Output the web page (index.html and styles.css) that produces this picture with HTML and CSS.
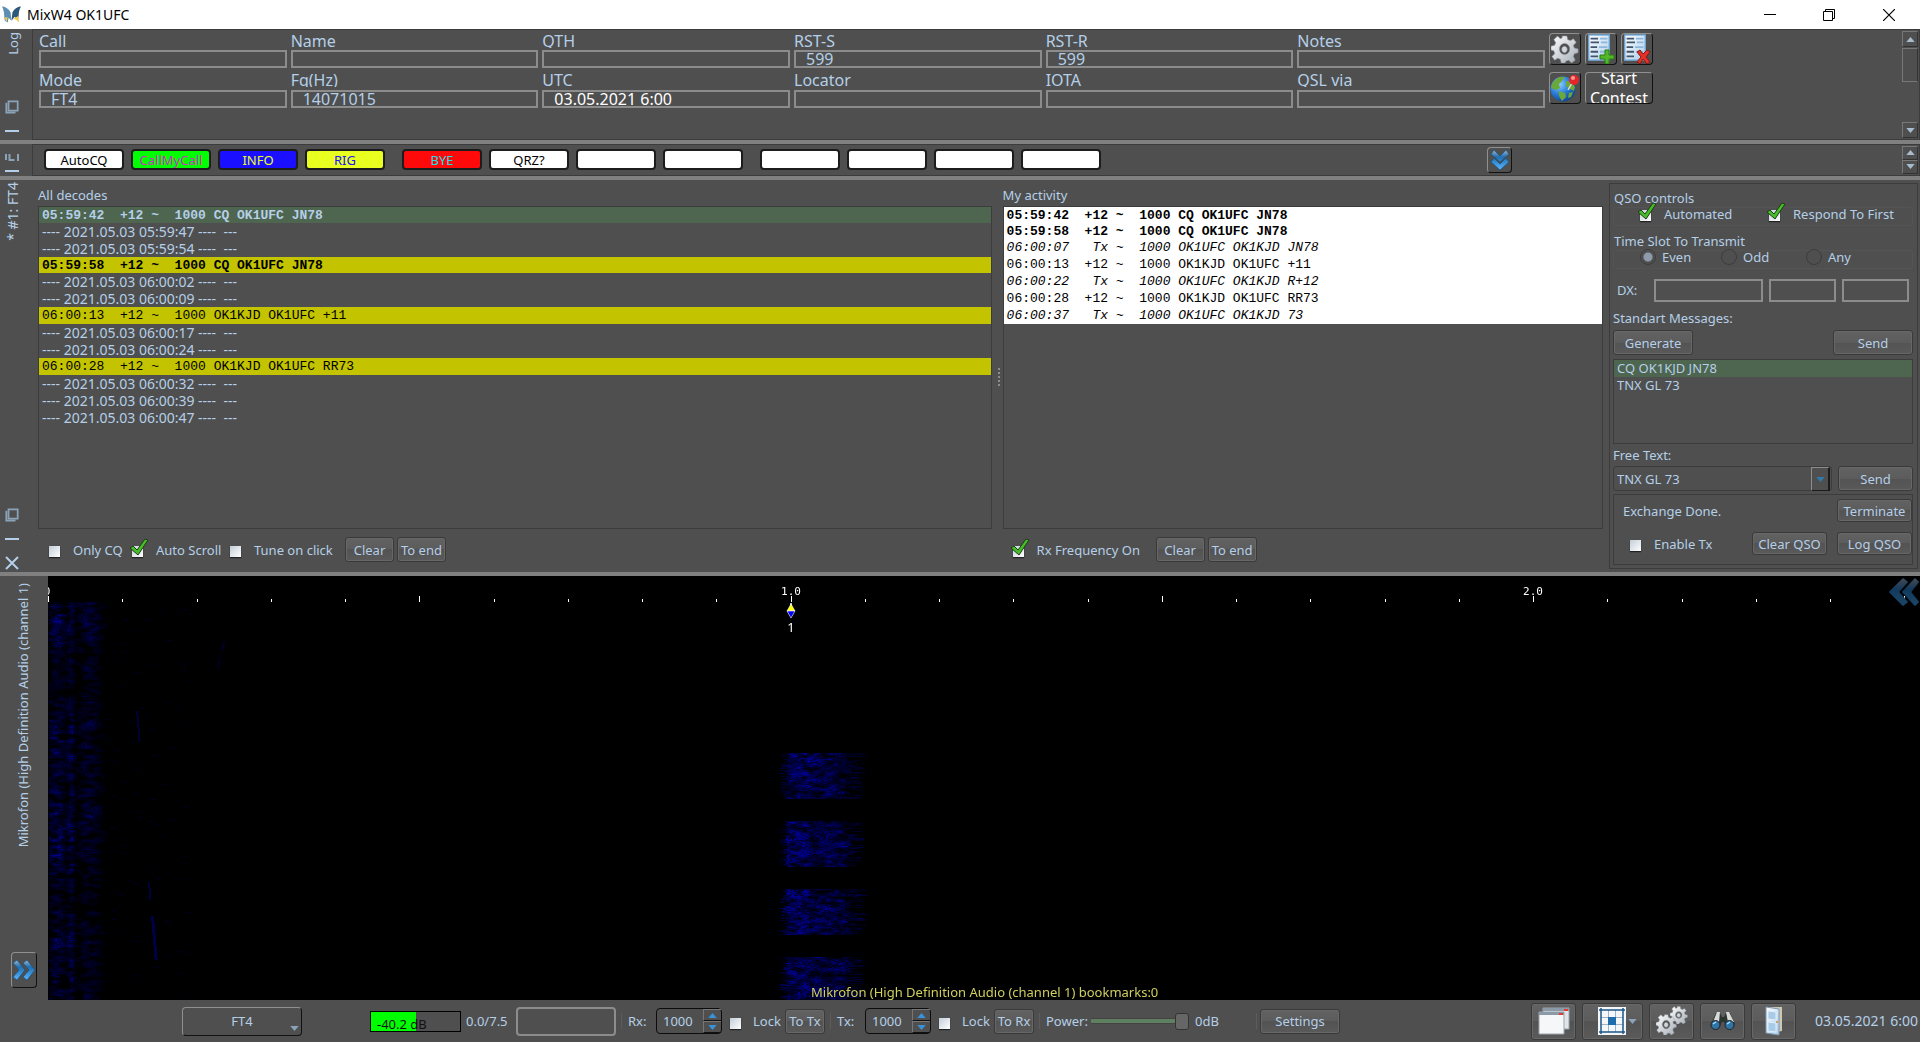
FILE: index.html
```html
<!DOCTYPE html>
<html lang="en">
<head>
<meta charset="utf-8">
<title>MixW4 OK1UFC</title>
<link rel="stylesheet" href="styles.css">
</head>
<body>
<svg width="0" height="0" class="defs" aria-hidden="true">
  <defs>
    <linearGradient id="blue" x1="0" y1="0" x2="0" y2="1"><stop offset="0" stop-color="#9fb4c8"/><stop offset=".35" stop-color="#1f6fb0"/><stop offset="1" stop-color="#5cb6ff"/></linearGradient>
    <linearGradient id="dim" x1="0" y1="0" x2="0" y2="1"><stop offset="0" stop-color="#4a4a50"/><stop offset=".4" stop-color="#123a5c"/><stop offset="1" stop-color="#1d4566"/></linearGradient>
    <linearGradient id="silver" x1="0" y1="0" x2="1" y2="1"><stop offset="0" stop-color="#ffffff"/><stop offset="1" stop-color="#a4adb6"/></linearGradient>
    <linearGradient id="sheet" x1="0" y1="0" x2="1" y2="1"><stop offset="0" stop-color="#ffffff"/><stop offset="1" stop-color="#a9cdea"/></linearGradient>
    <radialGradient id="ocean" cx=".35" cy=".3" r=".8"><stop offset="0" stop-color="#8fd0ff"/><stop offset=".5" stop-color="#2b7fd6"/><stop offset="1" stop-color="#0c3a86"/></radialGradient>
    <symbol id="gear" viewBox="0 0 30 30"><path fill="url(#silver)" stroke="#8d949b" stroke-width=".6" fill-rule="evenodd" d="M12 1h5l1 4 3 1 3-2 3 4-3 3 1 3 4 1v4l-4 1-1 3 2 4-4 3-3-3-3 1-1 2h-4l-1-4-3-1-3 2-3-4 3-3-1-3-3-1v-4l4-1 1-3-2-3 4-4 3 3 2-1zM14.500 9a5.500 6 0 1 0 .1 0zM14.500 12a3 3.500 0 1 1-.1 0z"/></symbol>
    <symbol id="sheetform" viewBox="0 0 24 30"><rect x="1" y="1" width="22" height="27" fill="url(#sheet)" stroke="#6fa6d6" stroke-width="1.500"/><path d="M3 5h8M3 9h9M3 14h7M3 19h8M3 24h8" stroke="#44546a" stroke-width="2"/><path d="M13 5h8M14 9h7M12 14h9M13 19h8" stroke="#8eb6da" stroke-width="2"/></symbol>
    <symbol id="float" viewBox="0 0 16 16"><path d="M4 1.500h10.500v10.500H4zM1.500 3v11.500H12" fill="none" stroke="#8ba3b8" stroke-width="2"/></symbol>
    <symbol id="up" viewBox="0 0 10 6"><path d="M0 6 5 0l5 6z" fill="currentColor"/></symbol>
    <symbol id="down" viewBox="0 0 10 6"><path d="M0 0h10L5 6z" fill="currentColor"/></symbol>
  </defs>
</svg>
<div class="app">
  <header class="titlebar">
    <svg class="logo" viewBox="0 0 20 17"><path d="M0 0c3 0 7 2 9 6l1 9-3-3-1 5-3-2C2 10 3 6 0 0z" fill="#5c8fb2"/><path d="M20 0c-3 0-7 2-9 6l-1 9 3-4 4 2C18 9 17 5 20 0z" fill="#2d5878"/><path d="M2 12l4-1-1 5zM12 13l5-3 1 7-3-3z" fill="#efc750"/></svg>
    <h1>MixW4 OK1UFC</h1>
    <div class="winbtns">
      <button aria-label="Minimize"><svg width="12" height="12" viewBox="0 0 12 12"><path d="M0 5.500h12" stroke="#000"/></svg></button>
      <button aria-label="Restore"><svg width="12" height="12" viewBox="0 0 12 12"><path d="M.5 2.500h9v9h-9zM2.500 2.500v-2h9v9h-2" fill="none" stroke="#000"/></svg></button>
      <button aria-label="Close"><svg width="12" height="12" viewBox="0 0 12 12"><path d="M0 0l12 12M12 0L0 12" stroke="#000" stroke-width="1.200"/></svg></button>
    </div>
  </header>

  <section class="dock log">
    <aside class="side">
      <span class="vtext">Log</span>
      <div class="sidebtns"><svg class="i14"><use href="#float"/></svg><i class="dash"></i></div>
    </aside>
    <div class="pane">
      <form class="fields">
        <label><span>Call</span><input type="text"></label>
        <label><span>Name</span><input type="text"></label>
        <label><span>QTH</span><input type="text"></label>
        <label><span>RST-S</span><input type="text" value="599"></label>
        <label><span>RST-R</span><input type="text" value="599"></label>
        <label><span>Notes</span><input type="text"></label>
        <label><span>Mode</span><input type="text" value="FT4"></label>
        <label><span>Fq(Hz)</span><input type="text" value="14071015"></label>
        <label><span>UTC</span><input class="white" type="text" value="03.05.2021 6:00"></label>
        <label><span>Locator</span><input type="text"></label>
        <label><span>IOTA</span><input type="text"></label>
        <label><span>QSL via</span><input type="text"></label>
      </form>
      <div class="tools">
        <button class="bevel" aria-label="Log settings"><svg width="28" height="28"><use href="#gear"/></svg></button>
        <button class="bevel" aria-label="Add record"><svg width="28" height="30" viewBox="0 0 28 30"><use href="#sheetform" width="24" height="28"/><path d="M18 16h4v5h5v4h-5v5h-4v-5h-5v-4h5z" fill="#52b82a" stroke="#2a7a10"/></svg></button>
        <button class="bevel" aria-label="Delete record"><svg width="28" height="30" viewBox="0 0 28 30"><use href="#sheetform" width="24" height="28"/><path d="M14 18l3-2 3 4 4-4 3 2-4 5 4 5-3 2-4-5-3 5-3-2 4-5z" fill="#e03228" stroke="#8f1410"/></svg></button>
        <button class="bevel" aria-label="Map"><svg width="30" height="28" viewBox="0 0 30 28"><circle cx="13" cy="15" r="12.500" fill="url(#ocean)"/><path d="M3 8l6-5 6 0-3 4-3 3 1 4-4 2-5-2zM16 7l6 1 3 5-1 4-4-2-4-3zM9 17l6 2 1 4-4 4-3-5zM19 19l4-1-2 5-3 1z" fill="#6aa83a"/><path d="M22 9l-4 7" stroke="#ddd" stroke-width="1.500"/><circle cx="24" cy="6" r="5" fill="#e2262a"/><circle cx="23" cy="4" r="2" fill="#ff9a96"/></svg></button>
        <button class="bevel contest"><span>Start Contest</span></button>
      </div>
      <div class="scroll">
        <button aria-label="Up"><svg class="tri"><use href="#up"/></svg></button>
        <i class="thumb"></i>
        <button aria-label="Down"><svg class="tri"><use href="#down"/></svg></button>
      </div>
    </div>
  </section>

  <section class="dock macros">
    <aside class="side">
      <svg width="14" height="7" viewBox="0 0 14 7"><path d="M1 0v6M4.500 0v6h5M13 0v7" fill="none" stroke="#8ba3b8" stroke-width="2"/></svg>
      <i class="dash"></i>
    </aside>
    <div class="pane">
      <div class="mbtns">
        <button>AutoCQ</button><button class="m-green">CallMyCall</button><button class="m-blue">INFO</button><button class="m-yellow">RIG</button>
        <button class="m-red first">BYE</button><button>QRZ?</button><button aria-label="Macro 7"></button><button aria-label="Macro 8"></button>
        <button class="first" aria-label="Macro 9"></button><button aria-label="Macro 10"></button><button aria-label="Macro 11"></button><button aria-label="Macro 12"></button>
      </div>
      <button class="bevel more" aria-label="More macros"><svg width="18" height="20" viewBox="0 0 18 20"><path d="M0 4l3-4 6 6 6-6 3 4-9 8zM0 12l3-4 6 6 6-6 3 4-9 8z" fill="url(#blue)" stroke="#14517f" stroke-width=".7"/></svg></button>
      <div class="scroll">
        <button aria-label="Up"><svg class="tri"><use href="#up"/></svg></button>
        <button aria-label="Down"><svg class="tri"><use href="#down"/></svg></button>
      </div>
    </div>
  </section>

  <section class="dock decode">
    <aside class="side">
      <span class="vtext">* #1: FT4</span>
      <div class="sidebtns"><svg class="i14"><use href="#float"/></svg><i class="dash"></i><svg class="i14" viewBox="0 0 14 14"><path d="M1 1l12 12M13 1L1 13" stroke="#b5cfe8" stroke-width="2"/></svg></div>
    </aside>
    <div class="lists">
      <div class="col all">
        <h2>All decodes</h2>
        <ul class="box">
          <li class="m b sel">05:59:42  +12 ~  1000 CQ OK1UFC JN78</li>
          <li>---- 2021.05.03 05:59:47 ----  ---</li>
          <li>---- 2021.05.03 05:59:54 ----  ---</li>
          <li class="m b hot">05:59:58  +12 ~  1000 CQ OK1UFC JN78</li>
          <li>---- 2021.05.03 06:00:02 ----  ---</li>
          <li>---- 2021.05.03 06:00:09 ----  ---</li>
          <li class="m hot">06:00:13  +12 ~  1000 OK1KJD OK1UFC +11</li>
          <li>---- 2021.05.03 06:00:17 ----  ---</li>
          <li>---- 2021.05.03 06:00:24 ----  ---</li>
          <li class="m hot">06:00:28  +12 ~  1000 OK1KJD OK1UFC RR73</li>
          <li>---- 2021.05.03 06:00:32 ----  ---</li>
          <li>---- 2021.05.03 06:00:39 ----  ---</li>
          <li>---- 2021.05.03 06:00:47 ----  ---</li>
        </ul>
        <div class="under">
          <label class="chk w83"><input type="checkbox">Only CQ</label>
          <label class="chk w98"><input type="checkbox" checked>Auto Scroll</label>
          <label class="chk w115"><input type="checkbox">Tune on click</label>
          <button class="btn">Clear</button><button class="btn">To end</button>
        </div>
      </div>
      <div class="grip"></div>
      <div class="col mine">
        <h2>My activity</h2>
        <ul class="box light">
          <li class="m b">05:59:42  +12 ~  1000 CQ OK1UFC JN78</li>
          <li class="m b">05:59:58  +12 ~  1000 CQ OK1UFC JN78</li>
          <li class="m it">06:00:07   Tx ~  1000 OK1UFC OK1KJD JN78</li>
          <li class="m">06:00:13  +12 ~  1000 OK1KJD OK1UFC +11</li>
          <li class="m it">06:00:22   Tx ~  1000 OK1UFC OK1KJD R+12</li>
          <li class="m">06:00:28  +12 ~  1000 OK1KJD OK1UFC RR73</li>
          <li class="m it">06:00:37   Tx ~  1000 OK1UFC OK1KJD 73</li>
        </ul>
        <div class="under">
          <label class="chk w143"><input type="checkbox" checked>Rx Frequency On</label>
          <button class="btn">Clear</button><button class="btn">To end</button>
        </div>
      </div>
    </div>
    <div class="qso">
      <fieldset class="grp">
        <legend>QSO controls</legend>
        <div class="opts">
          <label class="chk w129"><input type="checkbox" checked>Automated</label>
          <label class="chk"><input type="checkbox" checked>Respond To First</label>
        </div>
      </fieldset>
      <fieldset class="grp">
        <legend>Time Slot To Transmit</legend>
        <div class="opts">
          <label class="rad w81"><input type="radio" name="slot" checked>Even</label>
          <label class="rad w85"><input type="radio" name="slot">Odd</label>
          <label class="rad"><input type="radio" name="slot">Any</label>
        </div>
      </fieldset>
      <div class="dx"><label for="dx">DX:</label><input id="dx" class="call" type="text"><input type="text" aria-label="DX locator"><input type="text" aria-label="DX report"></div>
      <h3>Standart Messages:</h3>
      <div class="spread"><button class="btn w80">Generate</button><button class="btn w80">Send</button></div>
      <ul class="msgs"><li class="sel">CQ OK1KJD JN78</li><li>TNX GL 73</li></ul>
      <h3><label for="free">Free Text:</label></h3>
      <div class="spread free">
        <div class="combo"><select id="free"><option>TNX GL 73</option></select><i class="drop"><svg class="tri"><use href="#down"/></svg></i></div>
        <button class="btn w75">Send</button>
      </div>
      <div class="state">
        <div class="line"><span class="done">Exchange Done.</span><button class="btn w75 low">Terminate</button></div>
        <div class="line"><label class="chk grow"><input type="checkbox">Enable Tx</label><button class="btn w75 low">Clear QSO</button><button class="btn w75 low">Log QSO</button></div>
      </div>
    </div>
  </section>

  <section class="dock fall">
    <aside class="side">
      <span class="vtext">Mikrofon (High Definition Audio (channel 1)</span>
      <button class="bevel open" aria-label="Expand"><svg width="24" height="22" viewBox="0 0 24 22"><path d="M1 4l4-3 8 10-8 10-4-3 6-7zM11 4l4-3 8 10-8 10-4-3 6-7z" fill="url(#blue)" stroke="#14517f" stroke-width=".7"/></svg></button>
    </aside>
    <div class="water">
      <canvas id="spectrum"></canvas>
      <span class="mark zero">0</span>
      <span class="mark one">1.0</span>
      <span class="mark two">2.0</span>
      <div class="cursor"><svg width="10" height="16" viewBox="0 0 10 16"><path d="M5 0v4" stroke="#fff" stroke-width="1.500"/><path d="M5 1l4 7H1z" fill="#ff0" stroke="#fff" stroke-width=".6"/><path d="M1 8h8l-4 7z" fill="#00f" stroke="#fff" stroke-width=".6"/></svg><span>1</span></div>
      <svg class="back" width="30" height="28" viewBox="0 0 30 28"><path d="M14 0l5 4-9 10 9 10-5 4L0 14zM26 0l4 4-8 10 8 10-4 4-13-14z" fill="url(#dim)" stroke="#0f3554" stroke-width=".7"/></svg>
      <p class="caption">Mikrofon (High Definition Audio (channel 1) bookmarks:0</p>
    </div>
  </section>

  <footer class="status">
    <button class="bevel mode">FT4<svg class="tri"><use href="#down"/></svg></button>
    <div class="meter"><i style="width:54%"></i><span>-40.2 dB</span></div>
    <span class="ratio">0.0/7.5</span>
    <input class="txtbox" type="text" aria-label="Text">
    <i class="sep"></i>
    <label class="fl" for="rx">Rx:</label>
    <div class="spin"><input id="rx" type="text" value="1000"><button aria-label="Rx up"><svg><use href="#up"/></svg></button><button aria-label="Rx down"><svg><use href="#down"/></svg></button></div>
    <label class="chk lock"><input type="checkbox">Lock</label>
    <button class="btn w40">To Tx</button>
    <i class="sep"></i>
    <label class="fl" for="tx">Tx:</label>
    <div class="spin"><input id="tx" type="text" value="1000"><button aria-label="Tx up"><svg><use href="#up"/></svg></button><button aria-label="Tx down"><svg><use href="#down"/></svg></button></div>
    <label class="chk lock"><input type="checkbox">Lock</label>
    <button class="btn w40">To Rx</button>
    <i class="sep"></i>
    <label class="pw" for="power">Power:</label>
    <input id="power" type="range" min="0" max="100" value="100">
    <span class="db">0dB</span>
    <i class="sep"></i>
    <button class="btn w80">Settings</button>
    <div class="launch">
      <button class="btn big" aria-label="Windows"><svg width="32" height="28" viewBox="0 0 32 28"><path d="M5 1h26v21H5z" fill="#dfe5ea" stroke="#9aa4ad"/><path d="M5 1h26v3H5z" fill="#8b9aa8"/><path d="M26 2h4v2h-4z" fill="#e23b30"/><path d="M1 5h25v22H1z" fill="#f5f7f8" stroke="#9aa4ad"/><path d="M1 5h25v3H1z" fill="#8b9aa8"/><path d="M21 6h4v2h-4z" fill="#e23b30"/></svg></button>
      <button class="btn big grid" aria-label="Layout"><svg width="28" height="28" viewBox="0 0 28 28"><path d="M0 0h28v28H0z" fill="#f4f7fa"/><path d="M10.500 3v22M17.500 3v22M3 10.500h22M3 17.500h22" stroke="#9fb3c6"/><path d="M10 10h8v8h-8z" fill="#1f6cad"/><path d="M3 1v26M25 1v26M1 3h26M1 25h26" stroke="#1c5586" stroke-width="1.500"/></svg><svg class="tri"><use href="#down"/></svg></button>
      <button class="btn big" aria-label="Options"><svg width="32" height="30" viewBox="0 0 32 30"><use href="#gear" x="14" y="0" width="18" height="18"/><use href="#gear" x="0" y="8" width="21" height="21"/></svg></button>
      <button class="btn big" aria-label="Search"><svg width="26" height="20" viewBox="0 0 26 20"><path d="M6 2h4l2 4h2l2-4h4l5 11-7 5-4-7h-2l-4 7-7-5z" fill="#2c3430"/><path d="M7 1h3l-1 10-6 0zM16 1h3l5 10-6 0z" fill="#d7dbd8"/><circle cx="5.500" cy="14" r="4.500" fill="#2f75a6" stroke="#222"/><circle cx="19.500" cy="14" r="4.500" fill="#2f75a6" stroke="#222"/><path d="M3 13l3-2M17 13l3-2" stroke="#a8dcff" stroke-width="1.500"/></svg></button>
      <button class="btn big" aria-label="Exit"><svg width="20" height="30" viewBox="0 0 20 30"><path d="M2 1h16v24l-5 1V4z" fill="#cfc7b5"/><path d="M2 1l13 2v26L2 27z" fill="url(#sheet)" stroke="#7f97ac"/><path d="M4 5l8 1v8l-8-1zM4 16l8 1v9l-8-1z" fill="#a8cbe8" stroke="#dfeefa"/><circle cx="13" cy="16" r="1" fill="#d08b2a"/></svg></button>
      <time>03.05.2021 6:00</time>
    </div>
  </footer>
</div>
<script src="spectrum.js"></script>
</body>
</html>
```

FILE: styles.css
```css
* { box-sizing: border-box; margin: 0; padding: 0; }
body { font: 13px/16px "Noto Sans", sans-serif; color: #b5cfe8; background: #4f4f4f; }
button, input, select { font: inherit; color: inherit; background: none; border: 0; border-radius: 0; appearance: none; min-width: 0; }
button { display: flex; align-items: center; justify-content: center; flex: none; }
ul { list-style: none; }
h1, h2, h3 { font-weight: 400; font-size: inherit; }
fieldset { border: 0; min-width: 0; }
svg { display: block; flex: none; }
.defs { position: absolute; }
.app { display: flex; flex-direction: column; min-height: 100vh; }

/* Title bar */
.titlebar { display: flex; align-items: center; gap: 6px; height: 29px; padding-left: 2px; background: #fff; color: #000; }
.logo { width: 19px; height: 17px; }
.titlebar h1 { font-size: 14px; }
.winbtns { display: flex; margin-left: auto; }
.winbtns button { width: 59px; height: 28px; }
.winbtns button:last-child { width: 62px; }

/* Docked panels */
.dock { display: flex; border-bottom: 4px solid #808080; }
.side { display: flex; flex-direction: column; justify-content: space-between; flex: none; width: 32px; padding: 3px 0 8px 5px; }
.vtext { writing-mode: vertical-rl; transform: rotate(180deg); width: 17px; overflow: hidden; white-space: nowrap; }
.sidebtns { display: flex; flex-direction: column; gap: 16px; }
.i14 { width: 14px; height: 14px; }
.dash { width: 14px; height: 2px; background: #b5cfe8; }
.pane { display: flex; flex: 1; border: 1px solid #3c3c3c; min-width: 0; }

/* Log entry */
.log { height: 115px; }
.fields { flex: 1; display: grid; grid-template-columns: repeat(6, 1fr); gap: 4px; padding: 3px 0 0 6px; align-content: start; font-size: 16px; }
.fields label { display: block; min-width: 0; }
.fields span { display: block; height: 15px; margin-bottom: 2px; line-height: 16px; overflow: hidden; }
.fields input { display: block; width: 100%; height: 18px; line-height: 16px; border: 2px solid #8c8c8c; padding-left: 10px; }
.fields .white { color: #fff; }
.fields label:nth-child(n+7) input { margin-top: 3px; }
.tools { display: grid; grid-template-columns: repeat(3, 32px); gap: 7px 4px; padding: 3px 249px 0 4px; align-content: start; }
.bevel { border: 1px solid; border-color: #909090 #111 #111 #909090; border-radius: 4px; overflow: hidden; }
.tools .bevel { height: 32px; }
.tools .contest { grid-column: span 2; color: #fff; font-size: 16px; line-height: 20px; }
.contest span { width: 60px; }
.scroll { display: flex; flex-direction: column; width: 17px; flex: none; margin: 1px 0; color: #a9bccd; }
.scroll button { width: 16px; height: 16px; border: 1px solid #777; border-right-color: #333; border-bottom-color: #333; }
.tri { width: 9px; height: 5px; }
.thumb { width: 16px; height: 34px; border: 1px solid #777; border-right-color: #333; margin-top: 1px; }
.scroll button:last-child { margin-top: auto; }

/* Macro buttons */
.macros { height: 36px; }
.macros .side { padding: 10px 0 4px 5px; }
.macros .pane { align-items: center; padding-bottom: 1px; }
.mbtns { display: flex; gap: 7px; padding-left: 11px; color: #000; }
.mbtns button { width: 80px; height: 21px; background: #fff; border: 2px solid #1c1c1c; border-radius: 4px; }
.mbtns .first { margin-left: 10px; }
.mbtns .m-green { background: #00ff00; color: #d030c0; }
.mbtns .m-blue { background: #1a10ff; color: #e8ff20; }
.mbtns .m-yellow { background: #e8ff20; color: #2010ff; }
.mbtns .m-red { background: #ff0a0a; color: #20dfe8; }
.macros .more { width: 25px; height: 26px; margin-left: auto; margin-right: 390px; }
.macros .scroll { height: 28px; margin: 0; }
.macros .scroll button { height: 14px; }

/* Decodes */
.decode { height: 396px; }
.decode .side { padding: 2px 0 2px 5px; }
.decode .side .vtext { font-size: 14px; }
.lists { flex: 1; display: flex; padding: 7px 6px 0 6px; min-width: 0; }
.col { display: flex; flex-direction: column; min-width: 0; }
.all { flex: 953; }
.mine { flex: 600; }
.col h2 { height: 19px; }
.box { height: 323px; border: 1px solid #3c3c3c; }
.box li { height: 17px; line-height: 17px; font-size: 14px; padding-left: 3px; white-space: pre; overflow: hidden; }
.box .m { font-family: "Liberation Mono", "Courier New", monospace; font-size: 13px; }
.box .b { height: 16px; line-height: 17px; font-weight: 700; }
.box .it { font-style: italic; }
.box .hot { background: #c3c300; color: #000; }
.sel { background: #4e654f; }
.light li { background: #fff; color: #000; }
.grip { flex: none; width: 8px; height: 18px; margin: 181px 3px 0 0; border-right: 2px dotted #8c8c8c; }
.under { display: flex; align-items: center; gap: 3px; height: 41px; padding-left: 11px; }
.under .chk { margin-right: -3px; }
.mine .under { padding-left: 10px; }

/* Controls */
.chk, .rad { display: flex; align-items: center; flex: none; white-space: nowrap; }
.chk input { position: relative; flex: none; width: 11px; height: 11px; margin: 4px 13px 0 0; background: linear-gradient(135deg, #c3ced8, #fff); box-shadow: 0 1px 1px #222; }
.chk input:checked::after { content: ""; position: absolute; left: -3px; bottom: 0; width: 20px; height: 19px; background: url("data:image/svg+xml,%3Csvg xmlns='http://www.w3.org/2000/svg' viewBox='0 0 20 19'%3E%3Cpath d='M1 10l3-2 4 4L16 1l3 1L9 17z' fill='%2344bd27' stroke='%23203a18'/%3E%3C/svg%3E"); }
.w83 { width: 83px; }
.w98 { width: 98px; }
.w115 { width: 115px; }
.w143 { width: 143px; }
.w129 { width: 129px; }
.w81 { width: 81px; }
.w85 { width: 85px; }
.rad input { flex: none; width: 16px; height: 16px; margin-right: 6px; border: 1px solid #3c3c3c; border-radius: 50%; }
.rad input:checked { background: radial-gradient(circle, #8d9bab 4px, transparent 5px); }
.btn { width: 49px; height: 25px; border: 1px solid #3a3a3a; border-radius: 3px; background: linear-gradient(#626262, #5c5c5c 50%, #535353 50%, #5a5a5a); box-shadow: inset 0 0 0 1px #676767; white-space: nowrap; }
.low { height: 23px; }
.w80 { width: 80px; }
.w75 { width: 75px; }
.w40 { width: 40px; }

/* QSO panel */
.qso { flex: none; width: 309px; height: 386px; margin: 3px 2px 0 0; padding: 6px 4px 0 3px; border: 1px solid #3c3c3c; }
.grp { height: 43px; }
.grp legend { height: 17px; padding-left: 1px; line-height: 16px; white-space: nowrap; }
.opts { display: flex; align-items: center; height: 19px; padding-left: 26px; border: 1px solid #545454; border-radius: 3px; }
.opts label { height: 16px; margin-top: -6px; }
.dx { display: flex; align-items: center; gap: 6px; height: 24px; margin: 2px 4px 8px 4px; }
.dx label { width: 31px; }
.dx input { flex: 66; height: 23px; border: 2px solid #8c8c8c; }
.dx .call { flex: 110; }
.spread { display: flex; justify-content: space-between; margin: 4px 0; }
.msgs { height: 85px; border: 1px solid #3c3c3c; margin-bottom: 3px; }
.msgs li { height: 17px; line-height: 17px; padding-left: 3px; }
.free { gap: 6px; margin: 3px 0; }
.combo { position: relative; display: flex; flex: 1; height: 25px; border: 1px solid #3c3c3c; border-radius: 3px; }
.combo select { flex: 1; padding-left: 3px; }
.drop { position: absolute; top: 0; right: 1px; display: flex; align-items: center; justify-content: center; width: 19px; height: 24px; border: 1px solid #8c8c8c; border-right: 2px solid #1c1c1c; border-bottom: 1px solid #1c1c1c; color: #2f79ad; pointer-events: none; }
.state { height: 71px; padding-top: 4px; border: 1px solid #3c3c3c; }
.line { display: flex; align-items: center; gap: 10px; margin-bottom: 10px; }
.done { flex: 1; padding-left: 9px; }
.grow { flex: 1; padding-left: 16px; }

/* Waterfall */
.fall { flex: 1; border: 0; }
.fall .side { width: 48px; padding: 7px 0 12px 11px; }
.fall .vtext { margin-left: 4px; }
.open { width: 26px; height: 36px; }
.water { position: relative; flex: 1; min-width: 0; background: #000; overflow: hidden; }
.water canvas { position: absolute; inset: 0; width: 100%; height: 100%; }
.mark, .cursor, .back, .caption { position: absolute; }
.mark { top: 9px; width: 40px; text-align: center; color: #fff; font: 11px/14px "DejaVu Sans Mono", monospace; }
.zero { left: -21px; }
.one { left: 723px; }
.two { left: 1465px; }
.cursor { left: 738px; top: 27px; display: flex; flex-direction: column; align-items: center; color: #fff; }
.back { top: 2px; right: 1px; }
.caption { left: 763px; bottom: 0; color: #cfcf60; }

/* Status bar */
.status { display: flex; align-items: center; height: 42px; padding: 0 2px 0 182px; }
.mode { position: relative; width: 120px; height: 29px; }
.mode .tri { position: absolute; right: 2px; bottom: 4px; color: #8ba3b8; }
.meter { position: relative; width: 91px; height: 21px; margin-left: 68px; border: 1px solid #000; color: #111; flex: none; }
.meter i { display: block; max-width: 50%; height: 19px; background: #00ff00; }
.meter span { position: absolute; left: 6px; top: 4px; }
.ratio { width: 46px; margin-left: 5px; flex: none; }
.txtbox { width: 100px; height: 29px; margin-left: 4px; border: 2px solid #8c8c8c; border-radius: 4px; }
.sep { width: 1px; height: 16px; margin: 0 6px 0 5px; background: #5c5c5c; flex: none; }
.fl { width: 28px; flex: none; }
.spin { display: grid; grid-template: 12px 12px / 1fr 18px; width: 66px; height: 26px; border: 1px solid #0c0c0c; border-radius: 4px; flex: none; color: #3a93d8; }
.spin input { grid-row: span 2; width: 45px; padding-left: 6px; color: #b5cfe8; }
.spin button { border: 1px solid #777; border-right: 0; border-bottom-color: #111; }
.spin svg { width: 9px; height: 5px; }
.lock { margin-left: 8px; width: 55px; }
.lock input { margin-right: 12px; }
.pw { width: 45px; flex: none; }
#power { width: 98px; height: 18px; flex: none; background: linear-gradient(transparent 6px, #444 6px 7px, #5f8060 7px 11px, #444 11px 12px, transparent 12px); }
#power::-webkit-slider-thumb { appearance: none; width: 14px; height: 17px; border: 1px solid #333; border-radius: 3px; background: #666; }
.db { width: 56px; margin-left: 6px; flex: none; }
.sep + .w80 { margin-left: -3px; }
.launch { display: flex; align-items: center; gap: 6px; margin-left: auto; }
.big { width: 45px; height: 37px; }
.grid { width: 61px; gap: 2px; padding-left: 10px; color: #8ba3b8; }
time { margin-left: 13px; font-size: 14px; }
```

FILE: spectrum.js
```js
// Waterfall: receiver noise at the low end, four FT4 transmissions at 1.0 kHz and the scale ticks.
const canvas = document.getElementById("spectrum");
const w = canvas.width = canvas.clientWidth;
const h = canvas.height = canvas.clientHeight;
const ctx = canvas.getContext("2d");
let seed = 7;
const rnd = () => (seed = (seed * 16807) % 2147483647) / 2147483647;

// Smooth noise on a grid of cells, so that neighbouring streaks clump together.
const grid = Array.from({ length: 4096 }, rnd);
function clump(x, y) {
  const gx = x / 6, gy = y / 3;
  const ix = Math.floor(gx), iy = Math.floor(gy), fx = gx - ix, fy = gy - iy;
  const at = (a, b) => grid[(a * 37 + b * 101) % 4096];
  const top = at(ix, iy) * (1 - fx) + at(ix + 1, iy) * fx;
  const low = at(ix, iy + 1) * (1 - fx) + at(ix + 1, iy + 1) * fx;
  return top * (1 - fy) + low * fy;
}
function streak(x, y, len, level) {
  if (level < 0.06) return;
  ctx.fillStyle = `rgb(0,0,${Math.round(200 * Math.min(level, 0.7))})`;
  ctx.fillRect(Math.round(x), y, Math.round(len), 1);
}
for (let y = 26; y < h; y++) {
  const swell = 0.85 + 0.35 * Math.sin(y / 23) * Math.sin(y / 61);
  for (let x = 1; x < 66; x += 2) {
    const level = 0.6 * Math.exp(-Math.pow((x - 8) / 9, 2)) + 0.62 * Math.exp(-Math.pow((x - 22) / 3, 2)) +
      0.42 * Math.exp(-Math.pow((x - 40) / 11, 2));
    streak(x, y, 2 + rnd() * 3, level * swell * Math.pow(clump(x, y), 1.5) * (0.4 + rnd() * 1.3));
  }
  if (rnd() < 0.35) streak(55 + rnd() * 85, y, 5, 0.18 * rnd());
}
for (let y = 135; y < 166; y++) streak(88 + (y - 135) / 12, y, 2, 0.25);
for (let y = 306; y < 324; y++) streak(100 + (y - 306) / 12, y, 2, 0.28);
for (let y = 340; y < 384; y++) streak(103 + (y - 340) / 12, y, 3, 0.35);
for (let y = 62; y < 95; y++) streak(176 - (y - 62) / 4, y, 2, 0.25 * rnd());

for (const top of [177, 245, 313, 381]) {
  for (let y = top; y < Math.min(top + 46, h); y++) {
    const from = 730 + rnd() * 10, to = 794 + rnd() * 22;
    for (let x = from; x < to; x += 2) {
      const level = (x < 760 ? 0.85 : 0.65) * (x > 796 ? 0.6 : 1) * (x < 738 ? 0.6 : 1);
      streak(x, y, 2 + rnd() * 4, level * clump(x, y) * (0.4 + rnd() * 0.9));
    }
  }
}
ctx.fillStyle = "#fff";
for (let i = 0; i * 74.25 < w; i++) {
  const tall = i % 5 === 0;
  ctx.fillRect(Math.round(i * 74.25), tall ? 20 : 23, 1, tall ? 6 : 3);
}
```
